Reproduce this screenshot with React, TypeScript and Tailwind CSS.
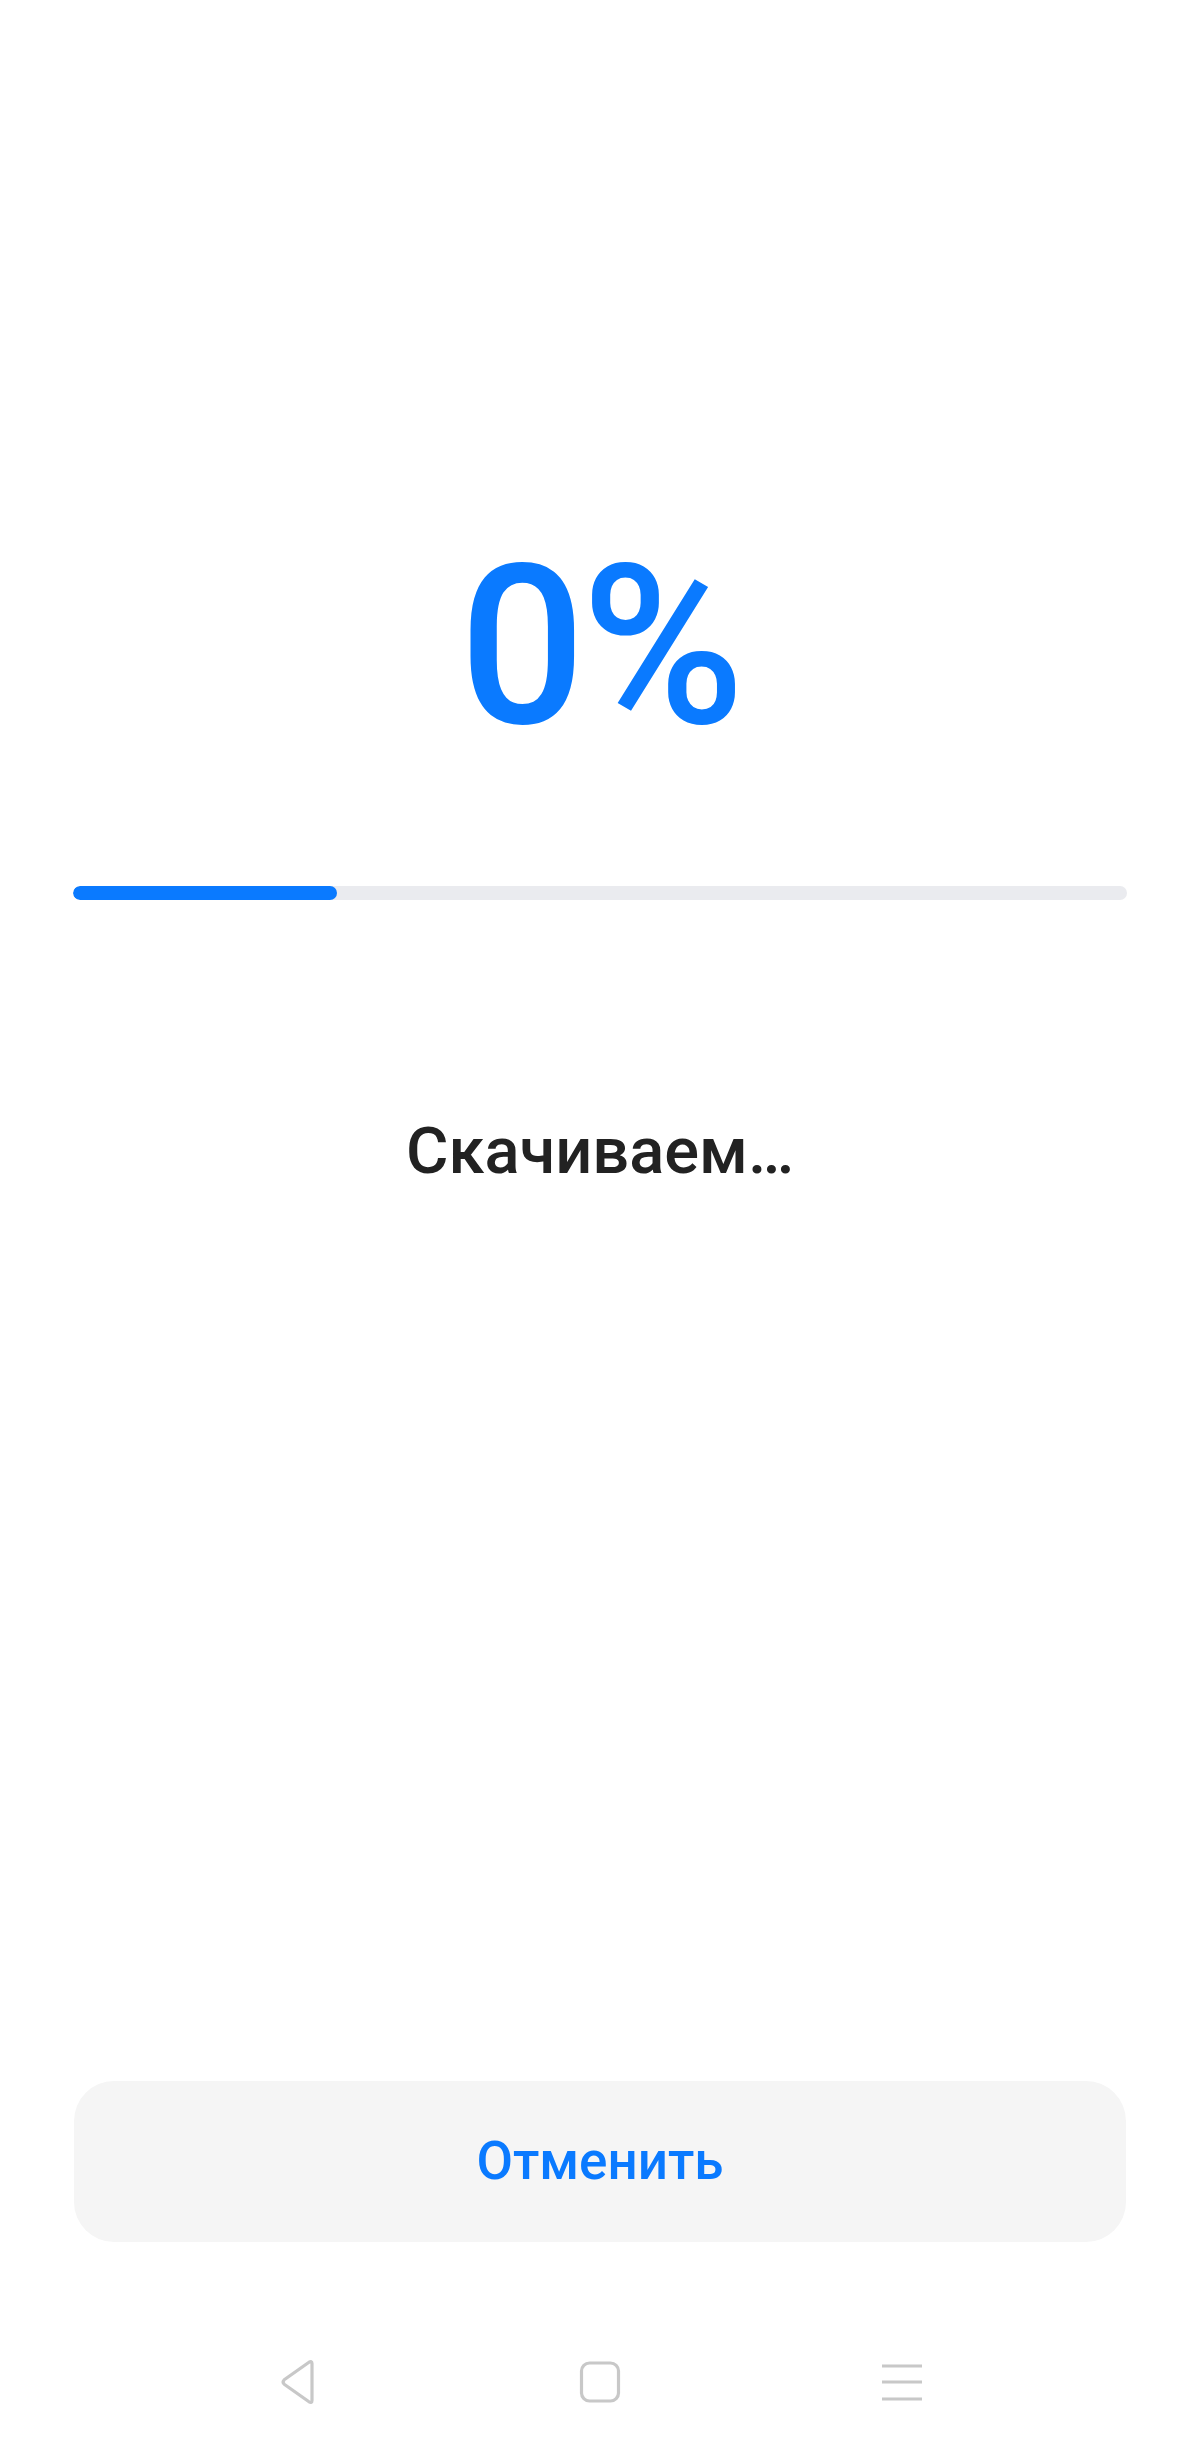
import React from "react";

function BackIcon() {
  return (
    <svg width="44" height="48" viewBox="0 0 44 48" fill="none">
      <path
        d="M36 5.5 Q36 2.5 33 4.2 L8.2 21.8 Q6 24 8.2 26.2 L33 43.8 Q36 45.5 36 42.5 Z"
        stroke="#C8C8C8"
        strokeWidth="3.2"
        strokeLinejoin="round"
      />
    </svg>
  );
}

function HomeIcon() {
  return (
    <svg width="44" height="44" viewBox="0 0 44 44" fill="none">
      <rect x="3.5" y="3" width="37" height="38" rx="8" stroke="#C8C8C8" strokeWidth="3.2" />
    </svg>
  );
}

function MenuIcon() {
  return (
    <svg width="44" height="44" viewBox="0 0 44 44" fill="none">
      <path d="M2 6H42M2 22H42M2 39H42" stroke="#C8C8C8" strokeWidth="3.2" />
    </svg>
  );
}

export default function App() {
  const progress = 25;
  return (
    <div className="w-[1200px] h-[2455px] bg-white flex flex-col items-center font-['Roboto',sans-serif]">
      <div className="mt-[536px] text-[222px] leading-none font-medium tracking-[-4px] text-[#0A7AFF]">0%</div>

      <div className="mt-[128px] w-[1054px] h-[14px] rounded-full bg-[#EAEBEF] overflow-hidden">
        <div className="h-full rounded-full bg-[#0A7AFF]" style={{ width: `${progress}%` }} />
      </div>

      <div className="mt-[219px] text-[65px] leading-none font-medium text-[#222222]">Скачиваем…</div>

      <button className="mt-[897px] w-[1052px] h-[161px] rounded-[40px] bg-[#F5F5F5] flex items-center justify-center text-[53px] font-medium text-[#0A7AFF]">
        Отменить
      </button>

      <nav className="mt-[100px] h-[80px] w-full flex items-center justify-center gap-[258px]">
        <BackIcon />
        <HomeIcon />
        <MenuIcon />
      </nav>
    </div>
  );
}
